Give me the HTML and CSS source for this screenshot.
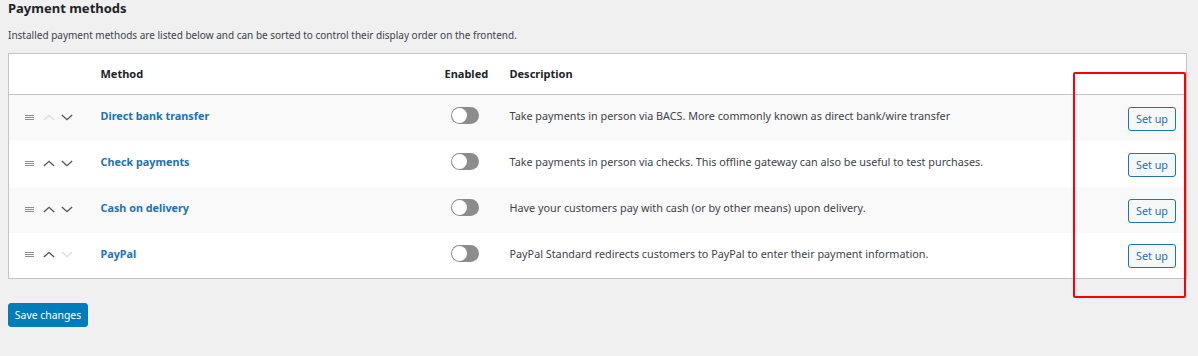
FILE: index.html
```html
<!DOCTYPE html>
<html lang="en">
<head>
<meta charset="utf-8">
<title>Payment methods</title>
<link rel="stylesheet" href="styles.css">
</head>
<body>
<div class="wrap">
  <h2 class="title">Payment methods</h2>
  <p class="intro">Installed payment methods are listed below and can be sorted to control their display order on the frontend.</p>
  <table class="gateways">
    <colgroup>
      <col class="c-sort"><col class="c-name"><col class="c-status"><col class="c-desc"><col class="c-action">
    </colgroup>
    <thead>
      <tr><th></th><th>Method</th><th>Enabled</th><th>Description</th><th></th></tr>
    </thead>
    <tbody>
      <tr>
        <td class="sort"><span class="handle"><i></i><i></i><i></i></span><svg class="chev off" viewBox="0 0 14 8"><path d="M1 7L7 1.5L13 7"/></svg><svg class="chev" viewBox="0 0 14 8"><path d="M1 1L7 6.5L13 1"/></svg></td>
        <td class="name"><a href="#">Direct bank transfer</a></td>
        <td class="status"><span class="toggle"><span class="knob"></span></span></td>
        <td class="desc">Take payments in person via BACS. More commonly known as direct bank/wire transfer</td>
        <td class="action"><a class="btn" href="#">Set up</a></td>
      </tr>
      <tr>
        <td class="sort"><span class="handle"><i></i><i></i><i></i></span><svg class="chev" viewBox="0 0 14 8"><path d="M1 7L7 1.5L13 7"/></svg><svg class="chev" viewBox="0 0 14 8"><path d="M1 1L7 6.5L13 1"/></svg></td>
        <td class="name"><a href="#">Check payments</a></td>
        <td class="status"><span class="toggle"><span class="knob"></span></span></td>
        <td class="desc">Take payments in person via checks. This offline gateway can also be useful to test purchases.</td>
        <td class="action"><a class="btn" href="#">Set up</a></td>
      </tr>
      <tr>
        <td class="sort"><span class="handle"><i></i><i></i><i></i></span><svg class="chev" viewBox="0 0 14 8"><path d="M1 7L7 1.5L13 7"/></svg><svg class="chev" viewBox="0 0 14 8"><path d="M1 1L7 6.5L13 1"/></svg></td>
        <td class="name"><a href="#">Cash on delivery</a></td>
        <td class="status"><span class="toggle"><span class="knob"></span></span></td>
        <td class="desc">Have your customers pay with cash (or by other means) upon delivery.</td>
        <td class="action"><a class="btn" href="#">Set up</a></td>
      </tr>
      <tr>
        <td class="sort"><span class="handle"><i></i><i></i><i></i></span><svg class="chev" viewBox="0 0 14 8"><path d="M1 7L7 1.5L13 7"/></svg><svg class="chev off" viewBox="0 0 14 8"><path d="M1 1L7 6.5L13 1"/></svg></td>
        <td class="name"><a href="#">PayPal</a></td>
        <td class="status"><span class="toggle"><span class="knob"></span></span></td>
        <td class="desc">PayPal Standard redirects customers to PayPal to enter their payment information.</td>
        <td class="action"><a class="btn" href="#">Set up</a></td>
      </tr>
    </tbody>
  </table>
  <button class="save" type="button">Save changes</button>
  <div class="highlight"></div>
</div>
</body>
</html>
```

FILE: styles.css
```css
* { box-sizing: border-box; }
html, body { margin: 0; padding: 0; }
body {
  background: #f0f0f1;
  font-family: "Noto Sans", "Open Sans", sans-serif;
  font-size: 11px;
  color: #3c434a;
}
.wrap {
  position: relative;
  padding: 0 11px 0 8px;
  height: 356px;
}
.title {
  margin: 0;
  font-size: 13px;
  line-height: 16px;
  font-weight: 700;
  color: #1d2327;
}
.intro {
  margin: 11px 0 0;
  line-height: 16px;
  font-size: 10px;
  color: #3c434a;
}
.gateways {
  margin-top: 10px;
  width: 100%;
  border-collapse: collapse;
  table-layout: fixed;
  background: #fff;
  border: 1px solid #c3c4c7;
}
.c-sort { width: 82px; }
.c-name { width: 344px; }
.c-status { width: 65px; }
.c-desc { width: 560px; }
.gateways th {
  height: 41px;
  padding: 0 10px 2px;
  text-align: left;
  font-size: 11px;
  font-weight: 700;
  color: #1d2327;
  border-bottom: 1px solid #c3c4c7;
  vertical-align: middle;
}
.gateways td {
  height: 46px;
  padding: 0 10px;
  vertical-align: middle;
}
.gateways td.name,
.gateways td.desc,
.gateways td.sort,
.gateways td.status { padding-bottom: 4px; }
.gateways tbody tr:nth-child(odd) { background: #f9f9f9; }
.gateways td.sort {
  padding-left: 16px;
  padding-right: 0;
  white-space: nowrap;
}
.handle {
  display: inline-flex;
  flex-direction: column;
  gap: 1px;
  width: 9px;
  vertical-align: middle;
  margin-right: 9px;
}
.handle i {
  display: block;
  height: 1px;
  background: #8c8f94;
}
.chev {
  width: 12px;
  height: 7px;
  vertical-align: middle;
  margin-right: 6px;
  fill: none;
  stroke: #50575e;
  stroke-width: 1.6;
}
.chev.off { stroke: #dcdcde; }
.name a {
  color: #2271b1;
  font-weight: 700;
  text-decoration: none;
  font-size: 10.8px;
}
.toggle {
  display: block;
  position: relative;
  margin-left: 6px;
  width: 28px;
  height: 17px;
  border-radius: 8.5px;
  background: #8c8c8c;
}
.knob {
  position: absolute;
  left: 1px;
  top: 1px;
  width: 15px;
  height: 15px;
  border-radius: 50%;
  background: #fff;
}
.desc { color: #3c434a; font-size: 10.8px; }
.action {
  text-align: right;
  padding-right: 10px !important;
}
.btn {
  display: inline-block;
  height: 24px;
  line-height: 22px;
  padding: 0 7px;
  font-size: 10.8px;
  color: #2271b1;
  background: #f6f7f7;
  border: 1px solid #2271b1;
  border-radius: 3px;
  text-decoration: none;
  margin-top: 2px;
}
.save {
  display: block;
  margin-top: 24px;
  height: 24px;
  width: 80px;
  padding: 0;
  font-family: inherit;
  font-size: 10.4px;
  color: #fff;
  background: #007cba;
  border: 1px solid #007cba;
  border-radius: 3px;
}
.highlight {
  position: absolute;
  left: 1073px;
  top: 72px;
  width: 113px;
  height: 226px;
  border: 2px solid #ff0000;
  border-radius: 2px;
  pointer-events: none;
}
```
